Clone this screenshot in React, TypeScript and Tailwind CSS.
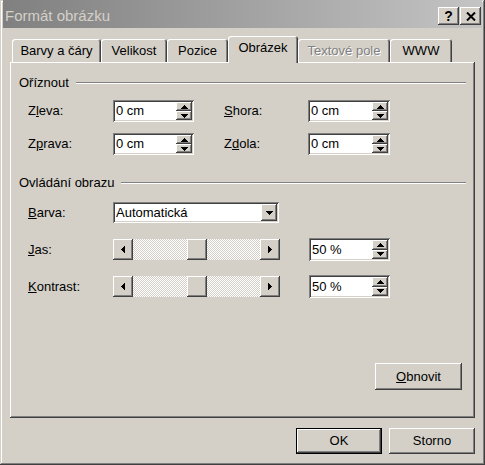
import React from "react";

const RAISED =
  "shadow-[inset_-1px_-1px_0_#404040,inset_1px_1px_0_#ffffff,inset_-2px_-2px_0_#808080,inset_2px_2px_0_#d4d0c8]";
const SUNKEN =
  "shadow-[inset_1px_1px_0_#808080,inset_-1px_-1px_0_#ffffff,inset_2px_2px_0_#404040,inset_-2px_-2px_0_#d4d0c8]";
const TAB =
  "shadow-[inset_1px_1px_0_#ffffff,inset_-1px_0_0_#404040,inset_-2px_0_0_#808080]";

function Tri({ dir }: { dir: "up" | "down" | "left" | "right" }) {
  if (dir === "up")
    return (
      <svg width="7" height="4" viewBox="0 0 7 4" shapeRendering="crispEdges">
        <polygon points="0,4 7,4 3.5,0" fill="#000" />
      </svg>
    );
  if (dir === "down")
    return (
      <svg width="7" height="4" viewBox="0 0 7 4" shapeRendering="crispEdges">
        <polygon points="0,0 7,0 3.5,4" fill="#000" />
      </svg>
    );
  if (dir === "left")
    return (
      <svg width="4" height="7" viewBox="0 0 4 7" shapeRendering="crispEdges">
        <polygon points="4,0 4,7 0,3.5" fill="#000" />
      </svg>
    );
  return (
    <svg width="4" height="7" viewBox="0 0 4 7" shapeRendering="crispEdges">
      <polygon points="0,0 0,7 4,3.5" fill="#000" />
    </svg>
  );
}

function Spin({ value, w, h }: { value: string; w: string; h: string }) {
  return (
    <div className={`flex ${w} ${h} bg-white p-[2px] ${SUNKEN}`}>
      <div className="flex-1 flex items-center pl-[1px]">{value}</div>
      <div className="flex flex-col w-[16px]">
        <div className={`flex-1 bg-[#d4d0c8] flex items-center justify-center ${RAISED}`}>
          <Tri dir="up" />
        </div>
        <div className={`flex-1 bg-[#d4d0c8] flex items-center justify-center ${RAISED}`}>
          <Tri dir="down" />
        </div>
      </div>
    </div>
  );
}

function Slider() {
  return (
    <div className="flex w-[167px] h-[21px]">
      <div className={`w-[20px] h-full bg-[#d4d0c8] flex items-center justify-center ${RAISED}`}>
        <Tri dir="left" />
      </div>
      <div className="flex-1 h-full flex justify-center bg-[image:repeating-conic-gradient(#ffffff_0%_25%,#d4d0c8_0%_50%)] bg-[length:2px_2px]">
        <div className={`w-[20px] h-full bg-[#d4d0c8] ${RAISED}`} />
      </div>
      <div className={`w-[20px] h-full bg-[#d4d0c8] flex items-center justify-center ${RAISED}`}>
        <Tri dir="right" />
      </div>
    </div>
  );
}

function GroupHeader({ label }: { label: string }) {
  return (
    <div className="flex items-center pl-[9px] pr-[9px] h-[16px]">
      <span>{label}</span>
      <div className="flex-1 ml-[7px] h-[2px] border-t border-b border-t-[#808080] border-b-white" />
    </div>
  );
}

function Tab({
  label,
  w,
  selected,
  disabled,
}: {
  label: string;
  w: string;
  selected?: boolean;
  disabled?: boolean;
}) {
  if (selected)
    return (
      <div
        className={`relative z-10 -mb-px ${w} h-[27px] pb-[3px] flex items-center justify-center bg-[#d4d0c8] rounded-t-[3px] ${TAB}`}
      >
        {label}
      </div>
    );
  return (
    <div
      className={`${w} h-[23px] pt-[1px] flex items-center justify-center bg-[#d4d0c8] rounded-t-[3px] ${TAB} ${
        disabled ? "text-[#808080] [text-shadow:1px_1px_0_#ffffff]" : ""
      }`}
    >
      {label}
    </div>
  );
}

export default function App() {
  return (
    <div className="w-[485px] h-[465px] bg-[#d4d0c8] px-[3px] pb-[3px] flex flex-col overflow-hidden text-black text-[13px] leading-[16px] font-['Liberation_Sans',Arial,sans-serif] shadow-[inset_-1px_-1px_0_#404040,inset_1px_1px_0_#d4d0c8,inset_-2px_-2px_0_#808080,inset_2px_2px_0_#ffffff]">
      {/* Title bar */}
      <div className="h-[28px] pt-[4px] pl-[2px] pr-[1px] flex items-center justify-between bg-linear-to-r from-[#808080] to-[#c4c4c4]">
        <span className="text-[15px] leading-[18px] text-[#d4d0c8]">Formát obrázku</span>
        <div className="flex gap-[1px]">
          <div
            className={`w-[21px] h-[18px] bg-[#d4d0c8] flex items-center justify-center text-[14px] font-bold leading-none ${RAISED}`}
          >
            ?
          </div>
          <div className={`w-[21px] h-[18px] bg-[#d4d0c8] flex items-center justify-center ${RAISED}`}>
            <svg width="10" height="9" viewBox="0 0 10 9">
              <path d="M1 0.5 L9 8.5 M9 0.5 L1 8.5" stroke="#000" strokeWidth="2" />
            </svg>
          </div>
        </div>
      </div>

      <div className="mt-[8px] mx-[7px] flex flex-col">
        {/* Tabs */}
        <div className="flex items-end h-[26px] pl-[2px]">
          <Tab label="Barvy a čáry" w="w-[89px]" />
          <Tab label="Velikost" w="w-[66px]" />
          <Tab label="Pozice" w="w-[61px]" />
          <Tab label="Obrázek" w="w-[70px]" selected />
          <Tab label="Textové pole" w="w-[92px]" disabled />
          <Tab label="WWW" w="w-[62px]" />
        </div>

        {/* Panel */}
        <div className="h-[356px] flex flex-col shadow-[inset_-1px_-1px_0_#404040,inset_1px_1px_0_#ffffff,inset_-2px_-2px_0_#808080]">
          <div className="mt-[13px]">
            <GroupHeader label="Oříznout" />
          </div>

          <div className="mt-[9px] pl-[18px] flex items-center h-[22px]">
            <span className="w-[85px]">
              Z<span className="underline">l</span>eva:
            </span>
            <Spin value="0 cm" w="w-[81px]" h="h-[22px]" />
            <span className="ml-[30px] w-[84px]">
              <span className="underline">S</span>hora:
            </span>
            <Spin value="0 cm" w="w-[82px]" h="h-[22px]" />
          </div>

          <div className="mt-[11px] pl-[18px] flex items-center h-[22px]">
            <span className="w-[85px]">
              Z<span className="underline">p</span>rava:
            </span>
            <Spin value="0 cm" w="w-[81px]" h="h-[22px]" />
            <span className="ml-[30px] w-[84px]">
              Z<span className="underline">d</span>ola:
            </span>
            <Spin value="0 cm" w="w-[82px]" h="h-[22px]" />
          </div>

          <div className="mt-[20px]">
            <GroupHeader label="Ovládání obrazu" />
          </div>

          <div className="mt-[11px] pl-[18px] flex items-center h-[21px]">
            <span className="w-[85px]">
              <span className="underline">B</span>arva:
            </span>
            <div className={`flex w-[166px] h-[21px] bg-white p-[2px] ${SUNKEN}`}>
              <div className="flex-1 flex items-center pl-[1px]">Automatická</div>
              <div className={`w-[16px] h-full bg-[#d4d0c8] flex items-center justify-center ${RAISED}`}>
                <Tri dir="down" />
              </div>
            </div>
          </div>

          <div className="mt-[15px] pl-[18px] flex items-center h-[23px]">
            <span className="w-[85px]">
              <span className="underline">J</span>as:
            </span>
            <Slider />
            <div className="ml-[29px]">
              <Spin value="50 %" w="w-[81px]" h="h-[23px]" />
            </div>
          </div>

          <div className="mt-[14px] pl-[18px] flex items-center h-[23px]">
            <span className="w-[85px]">
              <span className="underline">K</span>ontrast:
            </span>
            <Slider />
            <div className="ml-[29px]">
              <Spin value="50 %" w="w-[81px]" h="h-[23px]" />
            </div>
          </div>

          <div className="mt-[65px] pr-[13px] flex justify-end">
            <div className={`w-[87px] h-[27px] bg-[#d4d0c8] flex items-center justify-center ${RAISED}`}>
              <span>
                <span className="underline">O</span>bnovit
              </span>
            </div>
          </div>
        </div>

        {/* Bottom buttons */}
        <div className="mt-[10px] flex justify-end gap-[7px]">
          <div className="w-[86px] h-[26px] border border-black">
            <div className={`w-full h-full bg-[#d4d0c8] flex items-center justify-center ${RAISED}`}>OK</div>
          </div>
          <div className={`w-[86px] h-[26px] bg-[#d4d0c8] flex items-center justify-center ${RAISED}`}>
            Storno
          </div>
        </div>
      </div>
    </div>
  );
}
